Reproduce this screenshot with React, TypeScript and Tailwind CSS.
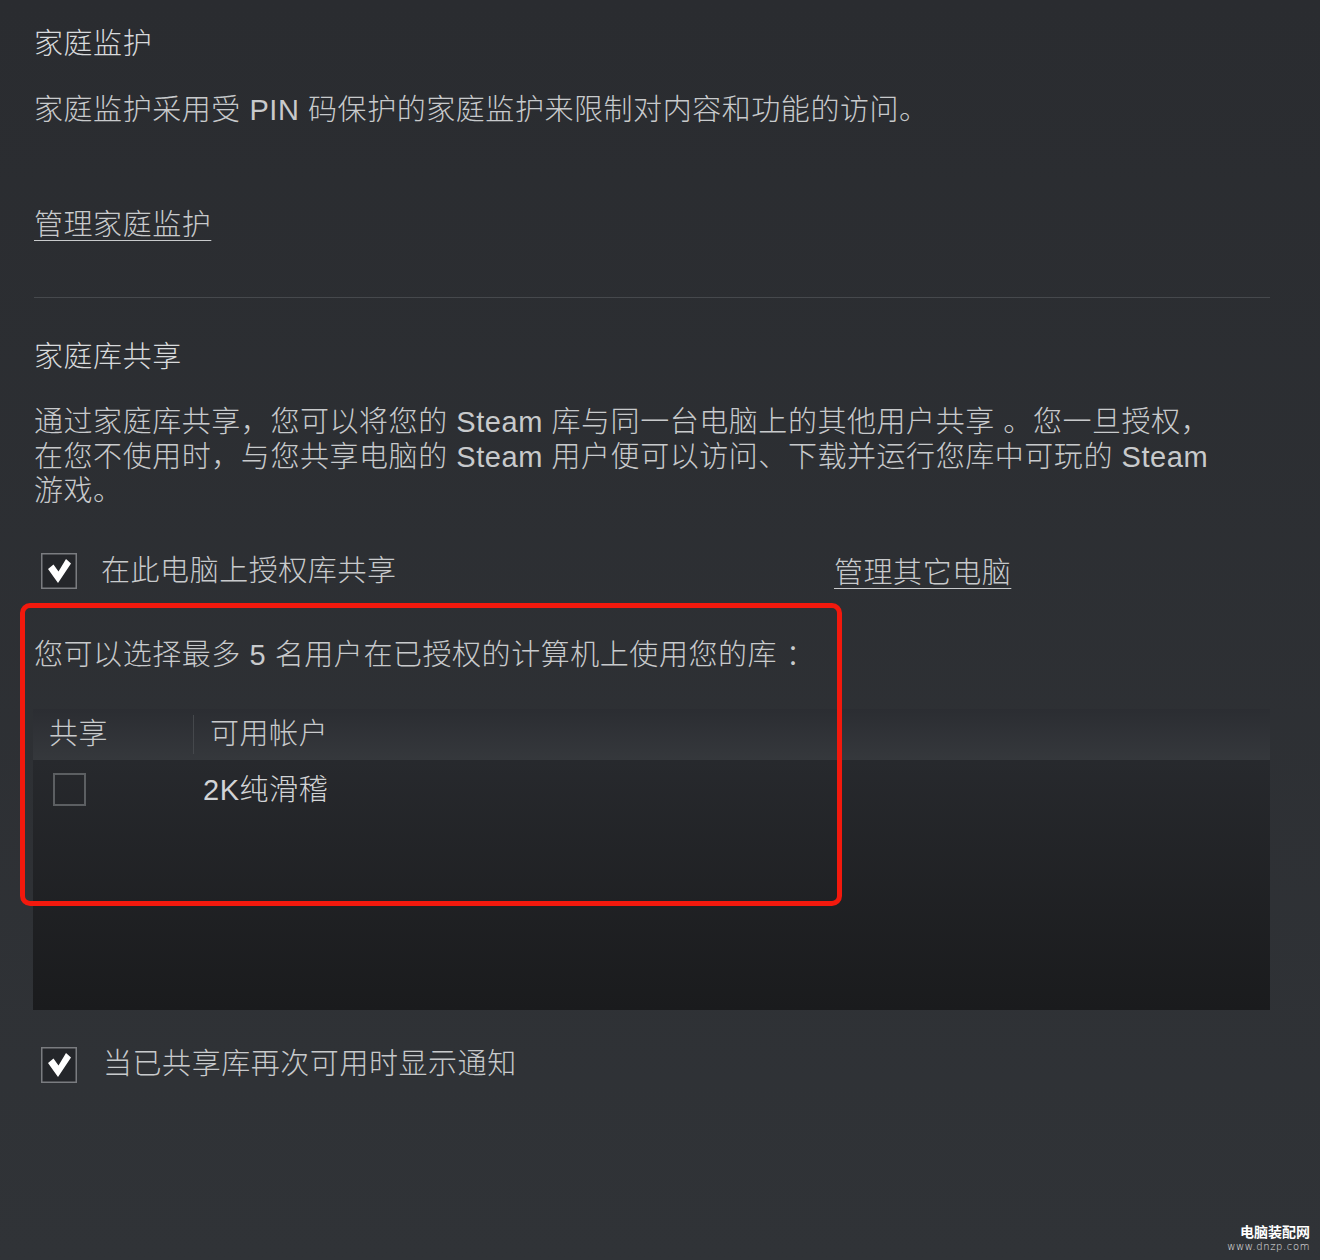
import React from "react";

function CheckedBox() {
  return (
    <svg width="36" height="36" viewBox="0 0 36 36" className="shrink-0 block">
      <rect x="0.75" y="0.75" width="34.5" height="34.5" fill="#24262a" stroke="#7a7c80" strokeWidth="1.5" />
      <path d="M7 16 L12.5 11.5 L17.5 18.5 L25 6 L30 10.5 L17 30 Z" fill="#ffffff" />
    </svg>
  );
}

export default function App() {
  return (
    <div className="relative w-[1320px] h-[1260px] overflow-hidden bg-gradient-to-b from-[#2a2c30] to-[#303337] font-['Liberation_Sans','Noto_Sans_CJK_SC',sans-serif] font-light text-[29px] leading-[35px] tracking-[0.55px] text-[#c8cacc]">
      <div className="pl-[34px] pr-[50px] pt-[27px]">
        <div className="text-[#d8dadc]">家庭监护</div>
        <div className="mt-[31px]">家庭监护采用受 PIN 码保护的家庭监护来限制对内容和功能的访问。</div>
        <div className="mt-[80px]">
          <span className="underline underline-offset-[5px] decoration-1">管理家庭监护</span>
        </div>
        <div className="mt-[54px] h-px bg-[#46494d]" />

        <div className="mt-[42px] text-[#d8dadc]">家庭库共享</div>
        <div className="mt-[30px] leading-[34.5px] whitespace-nowrap">
          通过家庭库共享，您可以将您的 Steam 库与同一台电脑上的其他用户共享 。您一旦授权，
          <br />
          在您不使用时，与您共享电脑的 Steam 用户便可以访问、下载并运行您库中可玩的 Steam
          <br />
          游戏。
        </div>

        <div className="mt-[43px] flex items-center">
          <div className="w-[800px] flex items-center">
            <div className="ml-[7px]">
              <CheckedBox />
            </div>
            <div className="ml-[24px]">在此电脑上授权库共享</div>
          </div>
          <span className="mt-[4px] underline underline-offset-[5px] decoration-1">管理其它电脑</span>
        </div>

        <div className="mt-[47px]">您可以选择最多 5 名用户在已授权的计算机上使用您的库 ：</div>

        <div className="mt-[36px] -ml-px w-[1237px]">
          <div className="h-[51px] flex items-center bg-gradient-to-b from-[#2b2d32] to-[#35383c]">
            <div className="w-[160px] pl-[16px]">共享</div>
            <div className="w-px h-[39px] bg-[#45484c]" />
            <div className="pl-[16px]">可用帐户</div>
          </div>
          <div className="h-[250px] bg-gradient-to-b from-[#27292d] to-[#1a1b1d] pt-[13px] flex items-start">
            <div className="ml-[20px] w-[33px] h-[33px] border-2 border-[#5c5f62]" />
            <div className="ml-[117px] text-[#d2d4d6]">2K纯滑稽</div>
          </div>
        </div>

        <div className="mt-[37px] flex items-center">
          <div className="ml-[7px]">
            <CheckedBox />
          </div>
          <div className="ml-[26px]">当已共享库再次可用时显示通知</div>
        </div>
      </div>

      <div className="absolute left-[20px] top-[603px] w-[822px] h-[303px] border-[5px] border-[#f2190d] rounded-[10px]" />

      <div className="absolute right-[10px] bottom-[6px] flex flex-col items-end tracking-normal">
        <div className="text-[14px] leading-[18px] font-bold text-white font-['Noto_Sans_CJK_SC',sans-serif]">电脑装配网</div>
        <div className="text-[10px] leading-[14px] tracking-[0.6px] text-[#e8e8e8] font-['DejaVu_Sans',sans-serif]">www.dnzp.com</div>
      </div>
    </div>
  );
}
